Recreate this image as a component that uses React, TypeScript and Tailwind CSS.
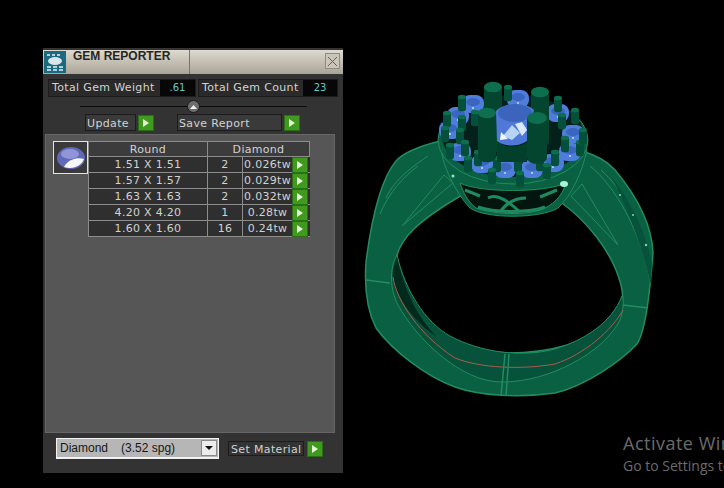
const rows = [
  { size: "1.51 X 1.51", count: "2", weight: "0.026tw" },
  { size: "1.57 X 1.57", count: "2", weight: "0.029tw" },
  { size: "1.63 X 1.63", count: "2", weight: "0.032tw" },
  { size: "4.20 X 4.20", count: "1", weight: "0.28tw" },
  { size: "1.60 X 1.60", count: "16", weight: "0.24tw" },
];

const GreenArrow = () => (
  <div className="w-[16px] h-[16px] shrink-0 bg-[#3f9a1e] border border-[#2c6e17] flex items-center justify-center">
    <svg width="6" height="8" viewBox="0 0 6 8">
      <path d="M0 0 L6 4 L0 8 Z" fill="#e6f5d8" />
    </svg>
  </div>
);

const Field = ({ label, value, w, vw }: { label: string; value: string; w: string; vw: string }) => (
  <div className={`flex h-[18px] border border-[#1c1c1c] bg-[#2a2a2a] ${w}`}>
    <span className="flex-1 pl-[3px] leading-[16px] text-[#d2d2d2] whitespace-nowrap tracking-[0.35px]">{label}</span>
    <span className={`bg-[#070707] text-[#62c8c8] text-center text-[10px] leading-[16px] ${vw}`}>{value}</span>
  </div>
);

const Prong = ({ x, y, w, h, big }: { x: number; y: number; w: number; h: number; big?: boolean }) => (
  <g>
    <rect x={x - w / 2} y={y} width={w} height={h} fill={big ? "#04452f" : "#05503a"} />
    <ellipse cx={x} cy={y} rx={w / 2} ry={w / 3.4} fill={big ? "#0d6f4d" : "#0c6e4c"} />
    <ellipse cx={x} cy={y + h} rx={w / 2} ry={w / 3.4} fill={big ? "#04452f" : "#05503a"} />
  </g>
);

const stones = [
  [458, 116], [473, 104], [518, 99], [558, 113], [573, 134], [570, 152], [553, 163], [532, 169],
  [505, 169], [482, 164], [460, 152], [450, 130],
];

const prongs = [
  [462, 97], [447, 113], [462, 117], [445, 128], [460, 130], [450, 145], [465, 142], [468, 158],
  [478, 152], [497, 158], [492, 170], [518, 158], [520, 173], [540, 157], [547, 165], [555, 152],
  [565, 138], [580, 142], [583, 130], [575, 110], [562, 115], [558, 98], [508, 87], [475, 112],
];

const RingDrawing = () => (
  <svg className="ml-[16px] mt-[22px] shrink-0" width="300" height="340" viewBox="359 70 300 340">
    {/* band */}
    <path
      fillRule="evenodd"
      fill="#0a6042"
      stroke="#238c60"
      strokeWidth="1.5"
      d="M440 141 C420 146 404 152 396 161 C382 178 372 215 366 262 C364 290 368 312 376 328 C392 350 425 376 455 387 C480 396 520 398 555 393 C585 386 620 362 637 344 C646 330 650 290 653 253 C652 228 640 200 615 170 C606 160 596 156 585 152 L562 203 C585 220 612 250 621 285 C625 300 622 312 612 322 C590 342 550 353 508 353 C470 352 432 335 412 305 C403 290 398 272 397 255 C402 238 416 222 462 195 Z"
    />
    {/* inner wall */}
    <path
      fill="#07523a"
      stroke="#238c60"
      d="M397 255 C389 268 390 290 398 305 C416 338 460 382 502 382 C550 382 604 352 620 320 C624 308 624 300 622 296 C612 322 585 340 555 349 C520 358 480 352 450 336 C425 322 405 290 397 255 Z"
    />
    <path fill="#03291c" d="M397 257 C392 268 392 280 396 290 C406 310 420 326 436 336 C418 318 404 290 397 257 Z" />
    {/* red seam */}
    <path fill="none" stroke="#a85c4c" d="M393 277 C396 300 420 336 455 358 C480 368 520 370 555 364 C585 354 612 330 623 310" />
    {/* section lines */}
    <g fill="none" stroke="#238c60">
      <path d="M366 280 L390 283 M623 305 L648 308 M505 354 L501 396 M509 354 L506 396" strokeWidth="1.5" />
      <path d="M402 226 L444 175 L453 183 Z M386 198 C395 178 415 165 428 156 M380 214 C388 194 404 176 418 166" />
      <path d="M571 196 L582 184 L618 245 Z M601 170 C622 188 642 225 651 270 M590 166 C615 186 640 230 650 280" />
    </g>
    <path fill="#07523a" d="M612 178 C630 200 645 230 652 262 L651 285 C642 245 628 210 612 178 Z" />
    <g fill="#7fd8b0">
      <circle cx="620" cy="195" r="1" />
      <circle cx="633" cy="215" r="1" />
      <circle cx="646" cy="245" r="1.2" />
    </g>
    {/* collar */}
    <path fill="#0a6042" stroke="#238c60" d="M441 150 C445 175 462 200 470 208 C485 219 540 219 558 208 C572 195 582 172 587 150 Z" />
    <path fill="#02150e" stroke="#238c60" d="M460 183 C480 193 545 193 566 183 C562 197 552 206 540 210 C520 216 495 214 476 208 C468 202 463 192 460 183 Z" />
    <path fill="none" stroke="#1f8a60" strokeWidth="3" d="M465 190 L480 196 M540 197 L557 190 M488 198 C498 192 512 205 520 212 M526 198 C514 198 505 205 500 212 M478 207 C495 213 530 213 545 207" />
    <circle cx="453" cy="176" r="1.5" fill="#7ff0c0" />
    <ellipse cx="564" cy="184" rx="4" ry="3" fill="#a8f5d5" />
    {/* head */}
    <ellipse cx="513" cy="140" rx="75" ry="44" fill="#0a6042" stroke="#238c60" />
    <ellipse cx="513" cy="136" rx="71" ry="41" fill="#03201a" />
    {stones.map(([x, y]) => (
      <g key={`${x}-${y}`}>
        <rect x={x - 11} y={y - 9} width="22" height="18" rx="8" fill="#4f7ddc" />
        <ellipse cx={x} cy={y - 2} rx="7" ry="4" fill="#3a66bf" />
        <circle cx={x} cy={y + 4} r="1" fill="#c8dcff" />
      </g>
    ))}
    {prongs.map(([x, y]) => (
      <Prong key={`${x}-${y}`} x={x} y={y} w={8} h={12} />
    ))}
    <Prong x={493} y={87} w={18} h={60} big />
    <Prong x={540} y={92} w={18} h={50} big />
    <path d="M496 111 C505 102 525 102 534 110 L527 141 C518 147 505 147 497 141 Z" fill="#4f78d8" />
    <ellipse cx="515" cy="113" rx="17" ry="9" fill="#3d64bc" />
    <path d="M512 125 L520 133 L512 140 L503 136 Z" fill="#b8d4f5" />
    <path d="M515 124 L522 122 L527 130 L522 136 Z" fill="#d9e8fa" />
    <path d="M501 132 L508 139 L500 140 Z" fill="#f4faff" />
    <Prong x={487} y={113} w={18} h={44} big />
    <Prong x={537} y={118} w={20} h={40} big />
    <path d="M497 142 C505 148 520 148 527 142 L527 162 L497 162 Z" fill="#03402b" />
  </svg>
);

export default function App() {
  return (
    <div
      className="relative w-[724px] h-[488px] overflow-hidden bg-black flex items-start pl-[43px] pt-[48px] text-[11px]"
      style={{ fontFamily: '"DejaVu Sans", sans-serif' }}
    >
      <div className="w-[300px] h-[425px] shrink-0 bg-[#333333] flex flex-col">
        {/* title bar */}
        <div className="mt-[2px] h-[24px] flex bg-gradient-to-b from-[#dedacf] to-[#a9a599] shrink-0">
          <div className="w-[22px] mx-[1px] my-[1px] bg-[#1d6a80] flex items-center justify-center">
            <svg width="20" height="20" viewBox="0 0 20 20">
              <path d="M2 3h3M7 3h3M12 3h3M2 15h4M8 15h4M14 15h4M2 18h4M8 18h4M14 18h4" stroke="#dff3f5" strokeWidth="1.5" />
              <ellipse cx="10" cy="9" rx="7" ry="4" fill="#d8e6ea" />
            </svg>
          </div>
          <div className="w-[122px] pl-[6px] -mt-[1px] font-bold text-[#26261f] leading-[14px] whitespace-nowrap" style={{ fontFamily: '"Liberation Sans", sans-serif', fontSize: 12 }}>
            GEM REPORTER
          </div>
          <div className="w-px bg-[#77746a]" />
          <div className="ml-auto mr-[3px] mt-[3px] w-[15px] h-[16px] bg-[#c9c5b8] border border-[#8e8b80] flex items-center justify-center">
            <svg width="9" height="9" viewBox="0 0 9 9">
              <path d="M0 0 L9 9 M9 0 L0 9" stroke="#a8433a" />
            </svg>
          </div>
        </div>

        {/* totals */}
        <div className="mt-[5px] pl-[5px] flex gap-[2px]">
          <Field label="Total Gem Weight" value=".61" w="w-[148px]" vw="w-[35px]" />
          <Field label="Total Gem Count" value="23" w="w-[140px]" vw="w-[34px]" />
        </div>

        {/* slider */}
        <div className="relative mt-[2px] mx-[37px] h-[14px] w-[227px] flex items-center">
          <div className="w-full h-px bg-[#0c0c0c]" />
          <div className="absolute left-[107px] top-[1px] w-[13px] h-[13px] rounded-full bg-[#6d6d6d] border border-[#1a1a1a] flex items-center justify-center">
            <svg width="7" height="4" viewBox="0 0 7 4"><path d="M0 4 L3.5 0 L7 4 Z" fill="#f2f2f2" /></svg>
          </div>
        </div>

        {/* actions */}
        <div className="mt-[1px] flex items-center pl-[42px] tracking-[0.35px]">
          <div className="w-[51px] h-[17px] border border-[#1c1c1c] bg-[#3a3a3a] text-[#d2d2d2] pl-[1px] leading-[17px]">Update</div>
          <div className="ml-[2px]"><GreenArrow /></div>
          <div className="ml-[23px] w-[105px] h-[17px] border border-[#1c1c1c] bg-[#3a3a3a] text-[#d2d2d2] pl-[1px] leading-[17px]">Save Report</div>
          <div className="ml-[2px]"><GreenArrow /></div>
        </div>

        {/* report */}
        <div className="mt-[3px] ml-[2px] w-[290px] h-[299px] bg-[#565656] border border-[#666666] flex items-start pl-[7px] pt-[6px]">
          <div className="w-[35px] h-[33px] shrink-0 border border-[#e4e4e4] bg-[#3a3a3a] flex items-center justify-center">
            <svg width="30" height="26" viewBox="0 0 30 26">
              <ellipse cx="15" cy="13" rx="14" ry="11" fill="#6068b8" />
              <ellipse cx="14" cy="9" rx="9" ry="5" fill="#8f95d6" />
              <path d="M8 22 C12 14 22 12 28 14 C26 20 18 25 8 22 Z" fill="#f6f6fb" />
            </svg>
          </div>
          <div className="w-[222px] text-[#d2d2d2] tracking-[0.3px]">
            <div className="flex h-[16px] border border-[#8c8c8c] bg-[#3c3c3c] leading-[15px]">
              <div className="w-[119px] text-center border-r border-[#8c8c8c]">Round</div>
              <div className="flex-1 text-center">Diamond</div>
            </div>
            {rows.map((row) => (
              <div key={row.size} className="flex h-[16px] bg-[#2f2f2f] border-b border-l border-[#8c8c8c] leading-[16px]">
                <div className="w-[119px] text-center border-r border-[#8c8c8c]">{row.size}</div>
                <div className="w-[35px] text-center border-r border-[#8c8c8c]">{row.count}</div>
                <div className="w-[49px] text-center whitespace-nowrap">{row.weight}</div>
                <GreenArrow />
              </div>
            ))}
          </div>
        </div>

        {/* material */}
        <div className="mt-[5px] pl-[13px] flex items-center">
          <div className="w-[163px] h-[21px] bg-[#b6b6b6] border border-[#f2f2f2] border-b-2 flex items-center pl-[3px] text-[#161616] text-[12px]" style={{ fontFamily: '"Liberation Sans", sans-serif' }}>
            <span>Diamond</span>
            <span className="ml-[13px] flex-1">(3.52 spg)</span>
            <div className="w-[16px] h-[16px] mr-[1px] bg-[#ececec] border border-[#8a8a8a] flex items-center justify-center">
              <svg width="8" height="4" viewBox="0 0 8 4"><path d="M0 0 L8 0 L4 4 Z" fill="#111" /></svg>
            </div>
          </div>
          <div className="ml-[9px] w-[76px] h-[15px] border border-[#1c1c1c] bg-[#333333] text-[#d2d2d2] pl-[2px] leading-[15px] whitespace-nowrap tracking-[0.35px]">Set Material</div>
          <div className="ml-[3px]"><GreenArrow /></div>
        </div>
      </div>

      <RingDrawing />

      {/* windows watermark */}
      <div className="absolute left-[623px] top-[431px] whitespace-nowrap text-[#6b6b6b]" style={{ fontFamily: '"Open Sans", sans-serif' }}>
        <div className="text-[18px] leading-[25px] tracking-[0.5px]">Activate Windows</div>
        <div className="text-[14px] leading-[19px]">Go to Settings to activate Windows.</div>
      </div>
    </div>
  );
}
